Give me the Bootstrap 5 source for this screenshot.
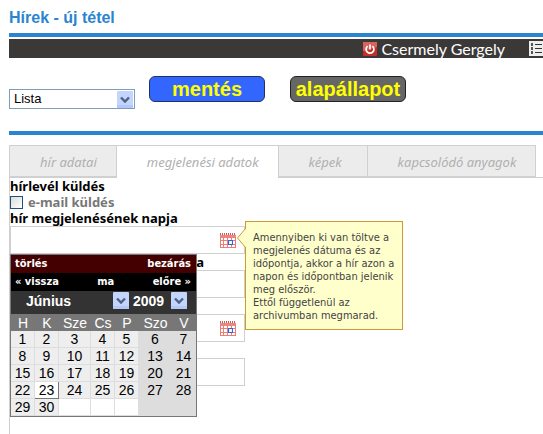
<!DOCTYPE html>
<html lang="hu">
<head>
<meta charset="utf-8">
<meta name="viewport" content="width=device-width, initial-scale=1">
<title>Hírek - új tétel</title>
<link href="https://cdn.jsdelivr.net/npm/bootstrap@5.3.0/dist/css/bootstrap.min.css" rel="stylesheet">
<style>
  :root { --line: #d0d0d0; --blue: #2a84d0; --arrow: url("data:image/svg+xml,%3Csvg xmlns='http://www.w3.org/2000/svg' width='16' height='17' viewBox='0 0 16 17'%3E%3Crect width='16' height='17' rx='1' fill='%23c3d5fd'/%3E%3Cpath d='M0 14h16v3H0z' fill='%23b3c8f8'/%3E%3Cpath d='M4 6.5l4 4 4-4' fill='none' stroke='%234d6185' stroke-width='2.4'/%3E%3C/svg%3E"); }
  body { font-family: "Noto Sans", sans-serif; font-size: 13px; line-height: 16px; color: #000; background: #fff; overflow: hidden; }
  button { border: 0; padding: 0; background: none; color: inherit; font: inherit; }
  .sheet { padding-left: 9px; }
  .page-title { font: bold 16px/20px "Liberation Sans", sans-serif; color: var(--blue); padding: 8px 0 5px; }
  .rule { height: 4px; background: var(--blue); }
  .userbar { height: 19px; margin-top: 2px; background: #3b3838; color: #fff; font: 16px/19px Lato, sans-serif; }
  .userbar a { color: #fff; gap: 4px; }
  .tools { padding: 18px 0 22px; }
  .pick { appearance: none; border-radius: 0; background-color: #fff; background-image: var(--arrow); background-repeat: no-repeat; font-family: "Liberation Sans", sans-serif; }
  .pick-list { width: 126px; height: 20px; margin-top: 13px; padding: 0 4px; border: 1px solid #7f9db9; background-position: right 1px center; font-size: 13px; line-height: 18px; }
  .act { width: 116px; height: 26px; border: 1px solid #22345c; border-radius: 6px; color: #ff0; font: bold 20px/22px "Liberation Sans", sans-serif; }
  .act-save { background: #36f; margin-left: 14px; }
  .act-reset { background: #666; border-color: #222; margin-left: 25px; }
  .tabs { padding-top: 10px; border-bottom: 1px solid var(--line); }
  .tabs a { height: 32px; min-width: 89px; padding: 0 19px 0 30px; border: 1px solid var(--line); border-right-width: 0; background: #ececec; color: #b0b0b0; font-style: italic; line-height: 32px; text-decoration: none; white-space: nowrap; }
  .tabs a:last-child { border-right-width: 1px; }
  .tabs a.current { background: #fff; margin-bottom: -1px; border-bottom: 0; height: 33px; }
  .pane { border-left: 1px solid var(--line); min-height: 256px; }
  .pane label { font-weight: bold; display: block; }
  .pane .soft { color: #777; }
  .tick { appearance: none; width: 13px; height: 13px; margin: 0 5px 0 0; border: 1px solid #1c5180; background: linear-gradient(135deg, #dcdcd7, #fff); }
  .field { width: 235px; height: 28px; border: 1px solid var(--line); }
  .field input { min-width: 0; border: 0; outline: 0; background: none; font-size: 12px; }
  .tip { left: 235px; top: -5px; width: 158px; padding: 9px 5px 7px 7px; background: #ffc; border: 1px solid #c93; color: #444; font: 11px/13px "DejaVu Sans Condensed", sans-serif; z-index: 3; }
  .tip svg { left: -9px; top: 5px; }
  .cal { left: 0; top: 28px; width: 187px; border: 1px solid #777; background: #ddd; color: #fff; font: 13px/16px "Liberation Sans", sans-serif; z-index: 2; }
  .cal-bar { height: 18px; padding: 0 5px 0 4px; background: #000; font: bold 11px/18px "DejaVu Sans Condensed", sans-serif; }
  .cal-top { background: #400; }
  .cal-pick { height: 23px; padding: 0 9px 0 15px; background: #333; }
  .cal .pick { height: 19px; background-color: transparent; border: 0; color: #fff; padding: 0; background-position: right center; font-weight: bold; font-size: 14px; }
  .month { width: 103px; }
  .year { width: 54px; }
  .days { width: 100%; table-layout: fixed; border-collapse: separate; border-spacing: 0; text-align: center; }
  .days th { height: 17px; padding: 0; background: #777; font-weight: normal; font-size: 14px; }
  .days td { height: 17px; padding: 0; border: 1px solid #ddd; border-width: 0 1px 1px 0; background: #eee; color: #000; line-height: 16px; font-size: 14px; }
  .days td button { display: block; width: 100%; }
  .days td:nth-child(n+6) { background: #ddd; }
  .days td.blank { background: #fff; }
  .days td.today { background: #fff; border-color: #777; }
</style>
<script src="https://cdn.jsdelivr.net/npm/bootstrap@5.3.0/dist/js/bootstrap.bundle.min.js"></script>
</head>
<body>
<svg class="d-none" aria-hidden="true">
  <symbol id="cal-icon" viewBox="0 0 16 15">
    <path d="M0 2h16v13H0z" fill="#ec7d75"/>
    <path d="M0 0h1v2H0zM2 0h1v2H2zM4 0h1v2H4zM6 0h1v2H6zM8 0h1v2H8zM10 0h1v2h-1zM12 0h1v2h-1zM14 0h1v2h-1z" fill="#b5655c"/>
    <path d="M0 2h16v3H0z" fill="#f0837b"/>
    <path d="M1 5h2v2H1zM4 5h3v2H4zM8 5h3v2H8zM12 5h3v2h-3zM1 8h2v3H1zM4 8h3v3H4zM13 8h2v3h-2zM1 12h2v2H1zM4 12h3v2H4zM8 12h3v2H8zM12 12h3v2h-3z" fill="#fff"/>
    <path d="M8 7h5v5H8z" fill="#2a68dc"/><path d="M9 8h3v3H9z" fill="#eef4ff"/>
  </symbol>
</svg>
<div class="sheet">
  <header>
    <h1 class="page-title m-0">Hírek - új tétel</h1>
    <div class="rule"></div>
    <nav class="userbar d-flex justify-content-end align-items-center">
      <a href="#" class="d-flex align-items-center text-decoration-none me-4">
        <svg width="14" height="14" viewBox="0 0 14 14" aria-hidden="true"><rect width="14" height="14" rx="1" fill="#c22f28"/><path d="M0 0h14v5L0 9z" fill="#d9635b"/><path d="M4.600 4.200a3.900 3.900 0 1 0 4.800 0M7 2.500v5" fill="none" stroke="#fff" stroke-width="1.700"/></svg>
        <span class="user-name">Csermely Gergely</span>
      </a>
      <a href="#" aria-label="Menü" class="d-flex">
        <svg width="14" height="15" viewBox="0 0 14 15" aria-hidden="true"><path d="M0 0h14v15H0z" fill="#eee"/><path d="M6 3.500h7M6 7.500h7M6 11.500h7" stroke="#333"/><path d="M2 2h2v3H2zM2 6h2v3H2zM2 10h2v3H2z" fill="#555"/></svg>
      </a>
    </nav>
  </header>

  <form>
    <div class="tools d-flex align-items-start">
      <select class="pick pick-list" aria-label="Művelet"><option>Lista</option></select>
      <button type="submit" class="act act-save">mentés</button>
      <button type="reset" class="act act-reset">alapállapot</button>
    </div>
    <div class="rule"></div>

    <nav class="tabs d-flex">
      <a href="#">hír adatai</a>
      <a href="#" class="current" aria-current="page">megjelenési adatok</a>
      <a href="#">képek</a>
      <a href="#">kapcsolódó anyagok</a>
    </nav>

    <section class="pane">
      <label for="mail">hírlevél küldés</label>
      <div class="d-flex align-items-center"><input id="mail" type="checkbox" class="tick"><label for="mail" class="soft">e-mail küldés</label></div>
      <label for="day">hír megjelenésének napja</label>
      <div class="position-relative">
        <div class="field d-flex align-items-center">
          <input id="day" type="text" class="flex-grow-1">
          <button type="button" class="d-flex me-2" aria-label="Naptár"><svg width="16" height="15"><use href="#cal-icon"/></svg></button>
        </div>
        <div class="tip position-absolute">
          <svg class="position-absolute" width="9" height="22" viewBox="0 0 9 22" aria-hidden="true"><path d="M9 1v20L0 11z" fill="#ffc"/><path d="M9 1L.5 11 9 21" fill="none" stroke="#c93"/></svg>
          Amennyiben ki van töltve a megjelenés dátuma és az időpontja, akkor a hír azon a napon és időpontban jelenik meg először.<br>Ettől függetlenül az archivumban megmarad.
        </div>
        <div class="cal position-absolute">
          <div class="cal-bar cal-top d-flex justify-content-between"><button type="button">törlés</button><button type="button">bezárás</button></div>
          <div class="cal-bar d-flex justify-content-between"><button type="button">« vissza</button><button type="button">ma</button><button type="button">előre »</button></div>
          <div class="cal-pick d-flex justify-content-between align-items-start">
            <select class="pick month" aria-label="Hónap"><option>Június</option></select>
            <select class="pick year" aria-label="Év"><option>2009</option></select>
          </div>
          <table class="days">
            <colgroup><col style="width:24px"><col style="width:24px"><col style="width:32px"><col style="width:24px"><col style="width:24px"><col style="width:33px"><col style="width:24px"></colgroup>
            <thead><tr><th>H</th><th>K</th><th>Sze</th><th>Cs</th><th>P</th><th>Szo</th><th>V</th></tr></thead>
            <tbody>
              <tr><td><button type="button">1</button></td><td><button type="button">2</button></td><td><button type="button">3</button></td><td><button type="button">4</button></td><td><button type="button">5</button></td><td><button type="button">6</button></td><td><button type="button">7</button></td></tr>
              <tr><td><button type="button">8</button></td><td><button type="button">9</button></td><td><button type="button">10</button></td><td><button type="button">11</button></td><td><button type="button">12</button></td><td><button type="button">13</button></td><td><button type="button">14</button></td></tr>
              <tr><td><button type="button">15</button></td><td><button type="button">16</button></td><td><button type="button">17</button></td><td><button type="button">18</button></td><td><button type="button">19</button></td><td><button type="button">20</button></td><td><button type="button">21</button></td></tr>
              <tr><td><button type="button">22</button></td><td class="today"><button type="button">23</button></td><td><button type="button">24</button></td><td><button type="button">25</button></td><td><button type="button">26</button></td><td><button type="button">27</button></td><td><button type="button">28</button></td></tr>
              <tr><td><button type="button">29</button></td><td><button type="button">30</button></td><td class="blank"></td><td class="blank"></td><td class="blank"></td><td></td><td></td></tr>
            </tbody>
          </table>
        </div>
      </div>
      <label for="hour">hír megjelenésének időpontja</label>
      <div class="field d-flex"><input id="hour" type="text" class="flex-grow-1"></div>
      <div class="field d-flex align-items-center mt-3">
        <input type="text" class="flex-grow-1" aria-label="archiválás napja">
        <button type="button" class="d-flex me-2" aria-label="Naptár"><svg width="16" height="15"><use href="#cal-icon"/></svg></button>
      </div>
      <div class="field d-flex mt-3"><input type="text" class="flex-grow-1" aria-label="archiválás időpontja"></div>
    </section>
  </form>
</div>
</body>
</html>
